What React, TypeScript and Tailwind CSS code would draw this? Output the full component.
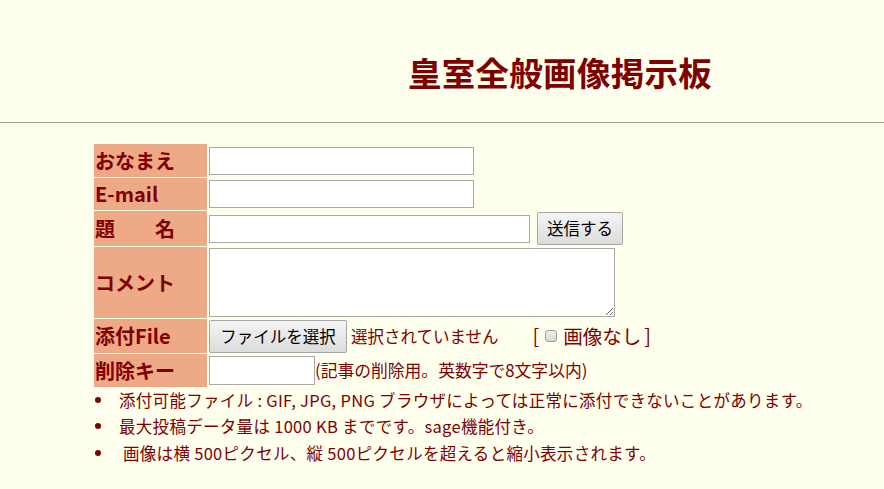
const jp = "font-['Meiryo','Noto_Sans_CJK_JP',sans-serif]";

function Label({ children }: { children: React.ReactNode }) {
  return (
    <td className="bg-[#eea987] p-0 pl-[1px] align-middle w-[113px] text-[20px] font-bold text-[#800000] whitespace-pre leading-none">
      {children}
    </td>
  );
}

export default function App() {
  return (
    <div className={`w-[884px] h-[489px] bg-[#ffffee] overflow-hidden ${jp}`}>
      <div className="h-[122px] pl-[236px] pt-[52px] text-center">
        <h1 className="text-[33.5px] font-bold text-[#800000] leading-[40px] tracking-[0.3px]">
          皇室全般画像掲示板
        </h1>
      </div>
      <div className="h-[1px] bg-[#9e9e9e] mb-[20px]" />

      <table className="ml-[93px] border-separate border-spacing-[1px] text-[#800000]">
        <tbody>
          <tr className="h-[33px]">
            <Label>おなまえ</Label>
            <td className="p-0 pl-[1px]">
              <input
                type="text"
                className="block w-[265px] h-[28px] bg-white border border-[#a9a9a9] outline-none"
              />
            </td>
          </tr>
          <tr className="h-[32px]">
            <Label>E-mail</Label>
            <td className="p-0 pl-[1px]">
              <input
                type="text"
                className="block w-[265px] h-[28px] bg-white border border-[#a9a9a9] outline-none"
              />
            </td>
          </tr>
          <tr className="h-[35px]">
            <Label>題　　名</Label>
            <td className="p-0 pl-[1px]">
              <div className="flex items-center gap-[7px]">
                <input
                  type="text"
                  className="block w-[321px] h-[28px] bg-white border border-[#a9a9a9] outline-none"
                />
                <button className="h-[33px] w-[86px] rounded-[2px] border border-[#a6a6a6] bg-gradient-to-b from-[#f4f4f4] to-[#dcdcdc] text-[16.5px] text-black leading-none">
                  送信する
                </button>
              </div>
            </td>
          </tr>
          <tr className="h-[71px]">
            <Label>コメント</Label>
            <td className="p-0 pl-[1px]">
              <textarea className="block w-[406px] h-[69px] bg-white border border-[#a9a9a9] outline-none resize" />
            </td>
          </tr>
          <tr className="h-[34px]">
            <Label>添付File</Label>
            <td className="p-0 pl-[1px]">
              <div className="flex items-center text-[16.5px] leading-none">
                <span className="h-[33px] w-[138px] flex items-center justify-center rounded-[2px] border border-[#a6a6a6] bg-gradient-to-b from-[#f4f4f4] to-[#dcdcdc] text-black">
                  ファイルを選択
                </span>
                <span className="ml-[4px] text-[16.5px]">選択されていません</span>
                <span className="ml-[34px] flex items-center text-[20px]">
                  [
                  <span className="shrink-0 ml-[6px] mr-[6px] w-[12px] h-[12px] rounded-[3px] border border-[#9c9c9c] bg-gradient-to-b from-[#f2f2f2] to-[#d6d6d6]" />
                  <span className="text-[19.5px] mr-[3px]">画像なし</span>]
                </span>
              </div>
            </td>
          </tr>
          <tr className="h-[33px]">
            <Label>削除キー</Label>
            <td className="p-0 pl-[1px]">
              <div className="flex items-center">
                <input
                  type="text"
                  className="block w-[106px] h-[29px] bg-white border border-[#a9a9a9] outline-none"
                />
                <span className="text-[16.8px] leading-none">
                  (記事の削除用。英数字で8文字以内)
                </span>
              </div>
            </td>
          </tr>
        </tbody>
      </table>

      <ul className="mt-0 ml-[95px] text-[#800000] text-[16.5px] tracking-[0.3px]">
        <li className="flex items-center h-[24px]">
          <span className="w-[6px] h-[6px] rounded-full bg-[#800000] mr-[18px]" />
          添付可能ファイル : GIF, JPG, PNG ブラウザによっては正常に添付できないことがあります。
        </li>
        <li className="flex items-center h-[28px]">
          <span className="w-[6px] h-[6px] rounded-full bg-[#800000] mr-[18px]" />
          最大投稿データ量は 1000 KB までです。sage機能付き。
        </li>
        <li className="flex items-center h-[26px]">
          <span className="w-[6px] h-[6px] rounded-full bg-[#800000] mr-[22px]" />
          画像は横 500ピクセル、縦 500ピクセルを超えると縮小表示されます。
        </li>
      </ul>
    </div>
  );
}
